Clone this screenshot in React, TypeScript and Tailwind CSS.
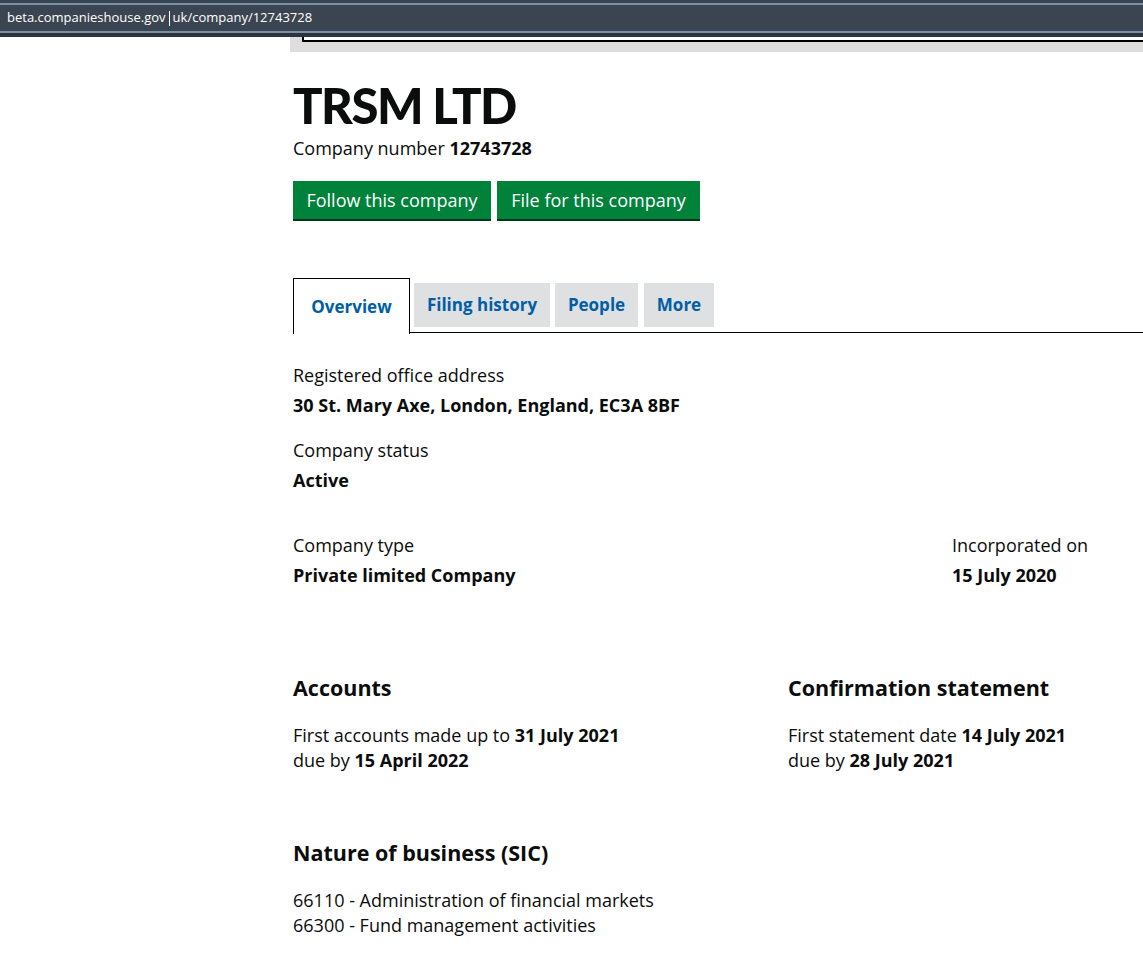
import React from "react";

export default function App() {
  const font = { fontFamily: "'Open Sans', Lato, Arial, sans-serif" };
  const tabCls = "mt-[6px] h-[44px] bg-[#dee0e2] flex items-center justify-center text-[17px] font-bold text-[#005ea5]";
  return (
    <div className="w-[1143px] h-[953px] bg-white overflow-hidden text-[#0b0c0c]" style={font}>
      {/* Browser address bar */}
      <div className="h-[37px] bg-[#2f3843] flex flex-col">
        <div className="h-[3px] bg-[#3a4450]" />
        <div className="h-[2px] bg-[#7890a6]" />
        <div className="h-[26px] bg-[#3b4551] flex items-center pl-[7px] text-[13px] text-white" style={{ fontFamily: "'Open Sans', 'DejaVu Sans', sans-serif" }}>
          <span>beta.companieshouse.gov</span>
          <span className="inline-block w-px h-[15px] bg-white mx-[3px]" />
          <span>uk/company/12743728</span>
        </div>
        <div className="h-[2px] bg-[#7890a6]" />
        <div className="flex-1 bg-[#2b333d]" />
      </div>

      {/* Grey strip with black rule */}
      <div className="flex">
        <div className="w-[290px]" />
        <div className="flex-1 h-[15px] bg-[#dedede] pl-[12px]">
          <div className="h-[5px] border-l-2 border-b-[2px] border-black bg-white" />
        </div>
      </div>

      <div className="pl-[293px]">
        <h1 className="mt-[27px] text-[49px] leading-[52px] font-black tracking-[-1.5px]" style={{ fontFamily: "Lato, 'Open Sans', sans-serif" }}>
          TRSM LTD
        </h1>
        <p className="mt-[5px] text-[18px] leading-[24px]">
          Company number <span className="font-bold">12743728</span>
        </p>

        <div className="mt-[21px] flex gap-[6px]">
          <button className="h-[40px] w-[198px] bg-[#00823b] text-white text-[18px] border-b-[2px] border-[#003618] flex items-center justify-center">
            Follow this company
          </button>
          <button className="h-[40px] w-[203px] bg-[#00823b] text-white text-[18px] border-b-[2px] border-[#003618] flex items-center justify-center">
            File for this company
          </button>
        </div>

        {/* Tabs */}
        <div className="mt-[56px] flex items-start border-b border-black h-[56px]">
          <div className="w-[117px] h-[56px] border border-black border-b-0 bg-white flex items-center justify-center text-[17px] font-bold text-[#005ea5] relative top-px">
            Overview
          </div>
          <div className={"ml-[4px] w-[136px] " + tabCls}>Filing history</div>
          <div className={"ml-[5px] w-[83px] " + tabCls}>People</div>
          <div className={"ml-[6px] w-[70px] " + tabCls}>More</div>
        </div>

        {/* Details */}
        <div className="mt-[30px] text-[18px] leading-[25px]">
          <p>Registered office address</p>
          <p className="mt-[5px] font-bold">30 St. Mary Axe, London, England, EC3A 8BF</p>
          <p className="mt-[20px]">Company status</p>
          <p className="mt-[5px] font-bold">Active</p>

          <div className="mt-[40px] flex">
            <div className="w-[659px]">
              <p>Company type</p>
              <p className="mt-[5px] font-bold">Private limited Company</p>
            </div>
            <div>
              <p>Incorporated on</p>
              <p className="mt-[5px] font-bold">15 July 2020</p>
            </div>
          </div>

          <div className="mt-[85px] flex">
            <div className="w-[495px]">
              <h2 className="text-[21.5px] leading-[30px] font-bold">Accounts</h2>
              <p className="mt-[20px]">
                First accounts made up to <span className="font-bold">31 July 2021</span>
              </p>
              <p>
                due by <span className="font-bold">15 April 2022</span>
              </p>
            </div>
            <div>
              <h2 className="text-[21.5px] leading-[30px] font-bold">Confirmation statement</h2>
              <p className="mt-[20px]">
                First statement date <span className="font-bold">14 July 2021</span>
              </p>
              <p>
                due by <span className="font-bold">28 July 2021</span>
              </p>
            </div>
          </div>

          <h2 className="mt-[65px] text-[21.5px] leading-[30px] font-bold">Nature of business (SIC)</h2>
          <p className="mt-[20px]">66110 - Administration of financial markets</p>
          <p>66300 - Fund management activities</p>
        </div>
      </div>
    </div>
  );
}
